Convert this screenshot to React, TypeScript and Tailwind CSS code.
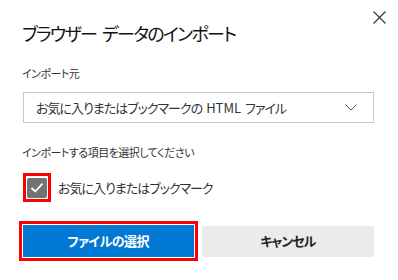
import React from 'react';

const font = "font-['Noto_Sans_CJK_JP','Noto_Sans',sans-serif] [font-feature-settings:'palt']";

const App: React.FC = () => {
    return (
        <div className={`relative w-[398px] h-[280px] bg-white text-[#1f1f1f] ${font}`}>
            <button className="absolute top-[11px] left-[373px] w-[13px] h-[13px] text-[#333]">
                <svg width="13" height="13" viewBox="0 0 13 13" fill="none" stroke="currentColor" strokeWidth="1.1">
                    <path d="M0.5 0.5 L12.5 12.5 M12.5 0.5 L0.5 12.5" />
                </svg>
            </button>

            <div className="flex flex-col pl-[22px] pr-[24px] pt-[21px]">
                <h2 className="text-[18px] leading-[24px] tracking-[-1.7px] font-normal text-[#111]">
                    ブラウザー<span className="ml-[6px]">データのインポート</span>
                </h2>

                <p className="mt-[20px] text-[11px] leading-[16px] tracking-[-0.5px] text-[#333]">インポート元</p>
                <div className="mt-[11px] h-[31px] ml-[1px] border border-[#c8c8c8] flex items-center justify-between pl-[12px] pr-[16px]">
                    <span className="text-[13px] tracking-[-1px] text-[#333]">
                        お気に入りまたはブックマークの<span className="ml-[4px] tracking-[0px]">HTML</span><span className="ml-[4px]">ファイル</span>
                    </span>
                    <svg width="12" height="7" viewBox="0 0 12 7" fill="none" stroke="#555" strokeWidth="1">
                        <path d="M0.5 0.5 L6 6 L11.5 0.5" />
                    </svg>
                </div>

                <p className="mt-[21px] text-[11px] leading-[16px] tracking-[-0.5px] text-[#333]">インポートする項目を選択してください</p>

                <div className="mt-[13px] flex items-center gap-[7px]">
                    <div className="ml-[1px] w-[28px] h-[29px] border-[3px] border-[#ff0000] flex items-center justify-center">
                        <div className="w-[20px] h-[20px] bg-[#737373] rounded-[2px] flex items-center justify-center">
                            <svg width="12" height="10" viewBox="0 0 12 10" fill="none" stroke="white" strokeWidth="1.8" strokeLinecap="round" strokeLinejoin="round">
                                <path d="M1 5.5 L4.3 8.5 L11 1.2" />
                            </svg>
                        </div>
                    </div>
                    <span className="text-[13px] tracking-[-1px] text-[#333]">お気に入りまたはブックマーク</span>
                </div>

                <div className="mt-[19px] ml-[-3px] flex items-center gap-[4px]">
                    <div className="w-[179px] h-[40px] border-[3px] border-[#ff0000] p-[1px] bg-white">
                        <button className="w-full h-full bg-[#0078d4] text-white text-[13px] tracking-[-0.5px] font-bold">ファイルの選択</button>
                    </div>
                    <button className="w-[173px] h-[31px] rounded-[2px] bg-[#ebebeb] text-[#222] text-[13px] tracking-[-1px] font-bold">キャンセル</button>
                </div>
            </div>
        </div>
    );
};

export default App;
